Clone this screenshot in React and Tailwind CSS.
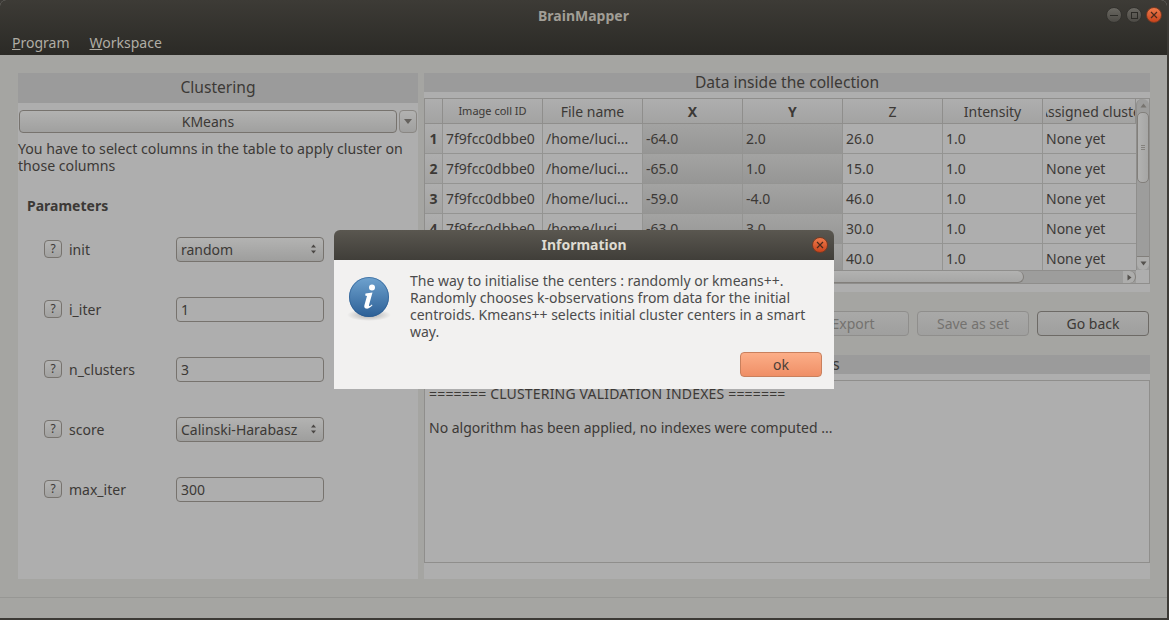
import React from 'react';

const font = { fontFamily: '"Noto Sans", sans-serif' };

const rows = [
  ['1', '-64.0', '2.0', '26.0'],
  ['2', '-65.0', '1.0', '15.0'],
  ['3', '-59.0', '-4.0', '46.0'],
  ['4', '-63.0', '3.0', '30.0'],
  ['5', '-60.0', '1.0', '40.0'],
];

const params = [
  { name: 'init', value: 'random', select: true },
  { name: 'i_iter', value: '1' },
  { name: 'n_clusters', value: '3' },
  { name: 'score', value: 'Calinski-Harabasz', select: true },
  { name: 'max_iter', value: '300' },
];

const Spinner = () => (
  <svg width="7" height="12" viewBox="0 0 7 12" className="shrink-0">
    <path d="M3.5 1.5 L6 4.5 H1 Z M1 7.5 H6 L3.5 10.5 Z" fill="#4a4744" />
  </svg>
);

const ParamRow = ({ param }) => (
  <div className="flex items-center h-[24px] pl-[26px]">
    <div className="w-[18px] h-[18px] rounded-[4px] border border-[#77736e] bg-gradient-to-b from-[#b4b4b3] to-[#a2a2a1] flex items-center justify-center text-[12px] leading-none text-[#3c3936]">?</div>
    <span className="ml-[7px] w-[107px] text-[14px] text-[#3c3936]">{param.name}</span>
    {param.select ? (
      <div className="w-[148px] h-[25px] rounded-[4px] border border-[#77736e] bg-gradient-to-b from-[#b3b3b2] to-[#9e9e9d] pl-[4px] pr-[6px] flex items-center justify-between text-[14px] text-[#3c3936]">
        <span>{param.value}</span>
        <Spinner />
      </div>
    ) : (
      <div className="w-[148px] h-[25px] rounded-[4px] border border-[#77736e] bg-[#aeaeae] pl-[4px] flex items-center text-[14px] text-[#3c3936]">{param.value}</div>
    )}
  </div>
);

const HeadCell = ({ className = '', children }) => (
  <div className={`h-[25px] shrink-0 border-r border-b border-[#8f8e8c] bg-gradient-to-b from-[#aeaeae] to-[#a3a3a2] flex items-center justify-center overflow-hidden whitespace-nowrap text-[#3c3936] ${className}`}>
    {children}
  </div>
);

const Cell = ({ className = '', children }) => (
  <div className={`h-[30px] shrink-0 border-r border-b border-[#949492] flex items-center pl-[3px] overflow-hidden whitespace-nowrap text-[14px] text-[#3c3936] ${className}`}>
    {children}
  </div>
);

const selectedCell = 'bg-gradient-to-b from-[#a3a3a2] to-[#969695]';

const DataTable = () => (
  <div className="h-[186px] border border-[#8f8e8c] flex relative overflow-hidden bg-[#aeaeae]">
    <div className="w-[711px] shrink-0 h-[171px] overflow-hidden">
      <div className="flex">
        <HeadCell className="w-[18px]" />
        <HeadCell className="w-[100px] text-[11px]">Image coll ID</HeadCell>
        <HeadCell className="w-[100px] text-[14px]">File name</HeadCell>
        <HeadCell className="w-[100px] text-[14px] font-bold">X</HeadCell>
        <HeadCell className="w-[100px] text-[14px] font-bold">Y</HeadCell>
        <HeadCell className="w-[100px] text-[14px]">Z</HeadCell>
        <HeadCell className="w-[100px] text-[14px]">Intensity</HeadCell>
        <HeadCell className="w-[93px] text-[14px] !justify-start pl-[3px]">
          <div className="w-[90px] overflow-hidden"><span className="-ml-[7px] inline-block">Assigned cluster</span></div>
        </HeadCell>
      </div>
      {rows.map((r) => (
        <div key={r[0]} className="flex">
          <Cell className="w-[18px] !pl-0 justify-center font-bold bg-gradient-to-b from-[#aeaeae] to-[#a3a3a2]">{r[0]}</Cell>
          <Cell className="w-[100px] text-[14.4px]">7f9fcc0dbbe0</Cell>
          <Cell className="w-[100px]">/home/luci...</Cell>
          <Cell className={`w-[100px] ${selectedCell}`}>{r[1]}</Cell>
          <Cell className={`w-[100px] ${selectedCell}`}>{r[2]}</Cell>
          <Cell className="w-[100px]">{r[3]}</Cell>
          <Cell className="w-[100px]">1.0</Cell>
          <Cell className="w-[93px] !border-r-0">None yet</Cell>
        </div>
      ))}
    </div>

    {/* vertical scrollbar */}
    <div className="absolute right-0 top-0 w-[13px] h-[171px] bg-[#9d9d9c] border-l border-[#8f8e8c] rounded-t-[6px] flex flex-col items-center">
      <div className="h-[13px] w-full flex items-center justify-center">
        <svg width="7" height="5" viewBox="0 0 7 5"><path d="M3.5 0.5 L6.5 4.5 H0.5 Z" fill="#77746f" /></svg>
      </div>
      <div className="w-[12px] h-[71px] rounded-[5px] border border-[#827f7b] bg-gradient-to-r from-[#b2b2b1] to-[#a6a6a5] flex flex-col items-center justify-center gap-[1px]">
        <div className="w-[4px] h-px bg-[#85827e]" />
        <div className="w-[4px] h-px bg-[#85827e]" />
        <div className="w-[4px] h-px bg-[#85827e]" />
      </div>
      <div className="flex-1" />
      <div className="h-[14px] w-full rounded-b-[6px] bg-[#adadac] border-t border-[#827f7b] flex items-center justify-center">
        <svg width="7" height="5" viewBox="0 0 7 5"><path d="M0.5 0.5 H6.5 L3.5 4.5 Z" fill="#55524e" /></svg>
      </div>
    </div>

    {/* horizontal scrollbar */}
    <div className="absolute left-0 bottom-0 h-[13px] w-[711px] border-t border-[#8f8e8c] bg-[#9d9d9c] flex">
      <div className="w-[599px] h-[12px] rounded-r-[6px] border-r border-b border-[#827f7b] bg-gradient-to-b from-[#b2b2b1] to-[#a6a6a5]" />
      <div className="flex-1" />
      <div className="w-[13px] h-[12px] rounded-r-[6px] border-r border-[#827f7b] bg-[#adadac] flex items-center justify-center">
        <svg width="5" height="7" viewBox="0 0 5 7"><path d="M0.5 0.5 V6.5 L4.5 3.5 Z" fill="#55524e" /></svg>
      </div>
    </div>
  </div>
);

const ActionButton = ({ label, disabled }) => (
  <div className={`w-[112px] h-[25px] rounded-[4px] border flex items-center justify-center text-[14px] bg-gradient-to-b from-[#a9a9a8] to-[#9f9f9e] ${disabled ? 'border-[#8f8e8c] text-[#74726f]' : 'border-[#6d6a66] text-[#3c3936]'}`}>
    {label}
  </div>
);

const InfoIcon = () => (
  <svg width="44" height="48" viewBox="0 0 44 48" className="shrink-0">
    <defs>
      <linearGradient id="infoFill" x1="0" y1="0" x2="0" y2="1">
        <stop offset="0" stopColor="#6fa3cf" />
        <stop offset="1" stopColor="#2c5f96" />
      </linearGradient>
      <radialGradient id="infoShadow">
        <stop offset="0" stopColor="#000" stopOpacity="0.3" />
        <stop offset="1" stopColor="#000" stopOpacity="0" />
      </radialGradient>
    </defs>
    <ellipse cx="22" cy="40" rx="22" ry="6" fill="url(#infoShadow)" />
    <circle cx="22" cy="22" r="20" fill="url(#infoFill)" />
    <circle cx="22" cy="22" r="19.5" fill="none" stroke="#2a5a8f" strokeOpacity="0.6" />
    <circle cx="25" cy="12.5" r="3" fill="#fff" />
    <path d="M18.5 18.5 L25.5 17.5 L22 30 C21.7 31.3 22.6 31.4 24.8 29.4 L25.5 30.3 C22.8 33.3 20.6 34 18.8 33.5 C17.4 33 17 31.8 17.4 30.2 L20 21 L18.2 20.4 Z" fill="#fff" />
  </svg>
);

const CloseButton = ({ size }) => (
  <div className={`rounded-full bg-gradient-to-b from-[#ef7a4a] to-[#c8431b] border border-[#7a3a22] flex items-center justify-center ${size}`}>
    <svg width="8" height="8" viewBox="0 0 8 8"><path d="M1 1 L7 7 M7 1 L1 7" stroke="#4a2a1c" strokeWidth="1.2" /></svg>
  </div>
);

const InfoDialog = () => (
  <div className="absolute left-[334px] top-[230px] w-[500px] h-[159px] flex flex-col">
    <div className="h-[30px] shrink-0 pb-[2px] rounded-t-[6px] bg-gradient-to-b from-[#5a5750] to-[#403e39] relative flex items-center justify-center text-[14px] font-bold text-[#dfdbd2]">
      Information
      <div className="absolute right-[6px] top-[7px]"><CloseButton size="w-[16px] h-[16px]" /></div>
    </div>
    <div className="flex-1 bg-[#f2f1f0] flex flex-col">
      <div className="flex pl-[13px]">
        <div className="pt-[15px]"><InfoIcon /></div>
        <p className="ml-[19px] pt-[12px] w-[415px] text-[14px] leading-[17px] text-[#4c4c4c]">
          The way to initialise the centers : randomly or kmeans++. Randomly chooses k-observations from data for the initial centroids. Kmeans++ selects initial cluster centers in a smart way.
        </p>
      </div>
      <div className="flex justify-end pr-[12px] pb-[12px] mt-auto">
        <div className="w-[82px] h-[25px] rounded-[4px] border border-[#c9805d] bg-gradient-to-b from-[#fcae88] to-[#ef8f66] flex items-center justify-center text-[14px] text-[#4a3f38]">ok</div>
      </div>
    </div>
  </div>
);

const App = () => {
  return (
    <div style={font} className="w-[1169px] h-[620px] relative overflow-hidden bg-[#3c3a36]">
      <div className="w-[1167px] h-[618px] flex flex-col rounded-t-[6px] overflow-hidden bg-[#a5a5a2]">
        {/* title + menu */}
        <div className="h-[55px] shrink-0 bg-gradient-to-b from-[#3d3b36] to-[#2b2a26] relative">
          <div className="h-[30px] flex items-center justify-center text-[14px] font-bold text-[#a19e96]">BrainMapper</div>
          <div className="flex gap-[20px] pl-[12px] mt-[2px] text-[14px] text-[#b0ada5]">
            <span><span className="underline">P</span>rogram</span>
            <span><span className="underline">W</span>orkspace</span>
          </div>
          <div className="absolute right-[5px] top-[7px] flex gap-[4px]">
            <div className="w-[16px] h-[16px] rounded-full bg-gradient-to-b from-[#6a6862] to-[#4c4a45] border border-[#33322e] flex items-center justify-center">
              <div className="w-[8px] h-px bg-[#2c2b27]" />
            </div>
            <div className="w-[16px] h-[16px] rounded-full bg-gradient-to-b from-[#6a6862] to-[#4c4a45] border border-[#33322e] flex items-center justify-center">
              <div className="w-[7px] h-[7px] border border-[#2c2b27]" />
            </div>
            <CloseButton size="w-[16px] h-[16px]" />
          </div>
        </div>

        {/* panels */}
        <div className="flex gap-[6px] pl-[18px] pt-[18px] h-[542px] shrink-0">
          <div className="w-[400px] h-[506px] bg-[#aeaeae] text-[#3c3936]">
            <div className="h-[30px] bg-[#9b9b9b] flex items-center justify-center text-[15.6px]">Clustering</div>
            <div className="flex gap-[2px] pl-[1px] mt-[7px]">
              <div className="w-[378px] h-[23px] rounded-[4px] border border-[#77736e] bg-gradient-to-b from-[#b2b2b1] to-[#a0a09f] flex items-center justify-center text-[14px]">KMeans</div>
              <div className="w-[18px] h-[23px] rounded-[4px] border border-[#8a8783] bg-gradient-to-b from-[#b2b2b1] to-[#a0a09f] flex items-center justify-center">
                <svg width="8" height="5" viewBox="0 0 8 5"><path d="M0 0 H8 L4 5 Z" fill="#65625e" /></svg>
              </div>
            </div>
            <p className="mt-[7px] w-[395px] text-[14.15px] leading-[17px]">You have to select columns in the table to apply cluster on those columns</p>
            <div className="mt-[21px] pl-[9px] text-[14px] font-bold">Parameters</div>
            <div className="mt-[21px] flex flex-col gap-[36px]">
              {params.map((p) => <ParamRow key={p.name} param={p} />)}
            </div>
          </div>

          <div className="w-[726px] h-[506px] flex flex-col">
            <div className="bg-[#aeaeae] h-[219px] shrink-0">
              <div className="h-[19px] bg-[#9b9b9b] flex items-center justify-center text-[15.6px] text-[#3c3936]">Data inside the collection</div>
              <div className="mt-[6px]"><DataTable /></div>
            </div>
            <div className="h-[63px] shrink-0 flex items-center justify-end gap-[8px] pr-px">
              <ActionButton label="Export" disabled />
              <ActionButton label="Save as set" disabled />
              <ActionButton label="Go back" />
            </div>
            <div className="flex-1 flex flex-col bg-[#aeaeae]">
              <div className="h-[19px] shrink-0 pt-[1px] bg-[#9b9b9b] flex items-center justify-center text-[15.6px] text-[#3c3936]">Result indexes</div>
              <div className="mt-[6px] h-[183px] border border-[#8f8e8c] px-[4px] pt-[4px] text-[14px] leading-[17px] text-[#3c3936]">
                <p className="tracking-[0.18px]">======= CLUSTERING VALIDATION INDEXES =======</p>
                <p className="mt-[17px]">No algorithm has been applied, no indexes were computed ...</p>
              </div>
            </div>
          </div>
        </div>

        {/* status bar */}
        <div className="flex-1 border-t border-[#979794]" />
      </div>
      <InfoDialog />
    </div>
  );
};

export default App;
